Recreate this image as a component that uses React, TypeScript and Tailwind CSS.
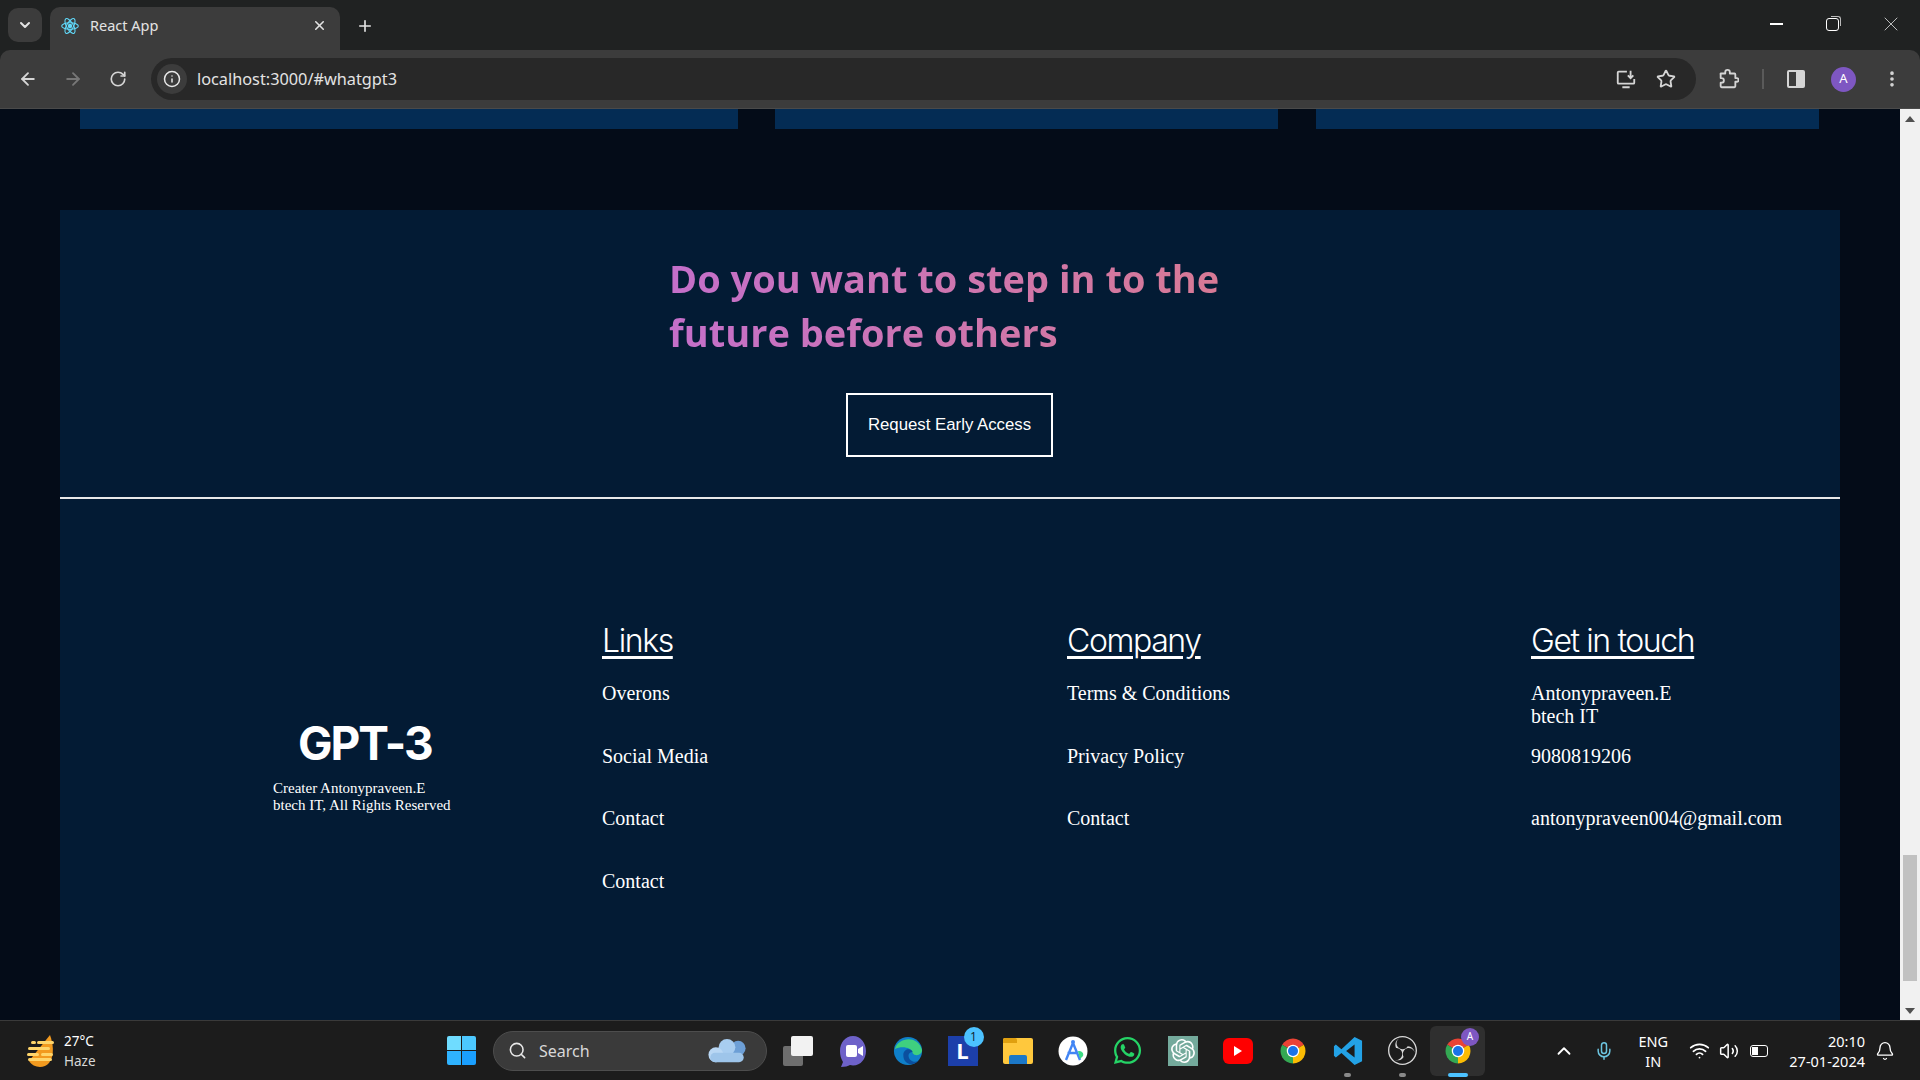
import React from 'react';
import {
  ArrowLeft, ArrowRight, RotateCw, Info, Star, EllipsisVertical, ChevronDown, ChevronUp,
  Plus, X, Mic, Wifi, Volume2, Bell, Search,
} from 'lucide-react';
import { FaWhatsapp } from 'react-icons/fa';
import { SiOpenai, SiObsstudio } from 'react-icons/si';

const linkItems = ['Overons', 'Social Media', 'Contact', 'Contact'];
const companyItems = ['Terms & Conditions', 'Privacy Policy', 'Contact'];

const ReactLogo = () => (
  <svg viewBox="0 0 24 24" className="h-5 w-5" fill="none" stroke="#61dafb" strokeWidth="1.3">
    <circle cx="12" cy="12" r="2" fill="#61dafb" />
    <ellipse cx="12" cy="12" rx="10" ry="4" />
    <ellipse cx="12" cy="12" rx="10" ry="4" transform="rotate(60 12 12)" />
    <ellipse cx="12" cy="12" rx="10" ry="4" transform="rotate(120 12 12)" />
  </svg>
);

const ChromeLogo = () => (
  <svg viewBox="0 0 48 48" className="h-[30px] w-[30px]">
    <path d="M24 24 L6.7 14 A20 20 0 0 1 41.3 14 Z" fill="#ea4335" />
    <path d="M24 24 L41.3 14 A20 20 0 0 1 24 44 Z" fill="#fbbc04" />
    <path d="M24 24 L24 44 A20 20 0 0 1 6.7 14 Z" fill="#34a853" />
    <circle cx="24" cy="24" r="10" fill="#fff" />
    <circle cx="24" cy="24" r="8" fill="#1a73e8" />
  </svg>
);

const Column = ({ title, children }: { title: string; children: React.ReactNode }) => (
  <div className="flex flex-col">
    <h3 className="mb-[19px] font-['Inter',sans-serif] text-[32px] leading-[44px] font-light tracking-[-1.4px] text-white underline decoration-[3px] underline-offset-[4px]">
      {title}
    </h3>
    {children}
  </div>
);

const Item = ({ children }: { children: React.ReactNode }) => (
  <div className="h-[62.5px] font-['Liberation_Serif',serif] text-[20px] leading-[23px] text-white">{children}</div>
);

const BrowserChrome = () => (
  <header className="flex flex-col bg-[#202222] font-['Noto_Sans',sans-serif]">
    <div className="flex h-[50px] items-end text-[#e3e3e3]">
      <div className="mb-2 ml-2 flex h-[34px] w-[34px] items-center justify-center rounded-[10px] bg-[#3c3c3c]">
        <ChevronDown size={16} strokeWidth={3} />
      </div>
      <div className="ml-2 flex h-[43px] w-[290px] items-center rounded-t-[10px] bg-[#3c3c3c] pr-[13px] pb-[6px] pl-[10px]">
        <ReactLogo />
        <span className="ml-[10px] flex-1 text-[14.5px]">React App</span>
        <X size={15} strokeWidth={2.5} />
      </div>
      <div className="mb-[15px] ml-[16px]">
        <Plus size={18} strokeWidth={2.2} />
      </div>
      <div className="mb-[14px] ml-auto flex items-center">
        <div className="h-[1.5px] w-[13px] bg-white" />
        <div className="relative ml-[43px] h-[13px] w-[13px] rounded-[3px] border border-white">
          <div className="absolute top-[-3px] right-[-3px] h-[10px] w-[10px] rounded-tr-[3px] border-t border-r border-[#bbb]" />
        </div>
        <div className="mr-[17px] ml-[40px]">
          <X size={24} strokeWidth={0.8} />
        </div>
      </div>
    </div>
    <div className="flex h-[59px] items-center rounded-t-[10px] border-b border-[#4a4a4a] bg-[#3c3c3c] text-[#d5d5d5]">
      <ArrowLeft size={20} strokeWidth={2.2} className="ml-[18px]" />
      <ArrowRight size={20} strokeWidth={2.2} className="ml-[25px] text-[#777]" />
      <RotateCw size={18} strokeWidth={2.2} className="ml-[26px]" />
      <div className="ml-[24px] flex h-[42px] w-[1545px] items-center rounded-full bg-[#282828]">
        <div className="ml-[6px] flex h-[30px] w-[30px] items-center justify-center rounded-full bg-[#3c3c3c]">
          <Info size={18} strokeWidth={2} className="text-[#e8e8e8]" />
        </div>
        <span className="ml-[10px] flex-1 text-[16.3px] text-[#e3e3e3]">localhost:3000/#whatgpt3</span>
        <svg viewBox="0 0 24 24" className="h-[22px] w-[22px]" fill="none" stroke="#d5d5d5" strokeWidth="2">
          <path d="M13 4H4a1 1 0 0 0-1 1v11a1 1 0 0 0 1 1h16a1 1 0 0 0 1-1v-4M17 3v8M14 8l3 3 3-3M8 21h8" />
        </svg>
        <Star size={20} strokeWidth={2.2} className="mr-[20px] ml-[19px]" />
      </div>
      <svg viewBox="0 0 24 24" className="ml-[21px] h-[22px] w-[22px]" fill="none" stroke="#d5d5d5" strokeWidth="2" strokeLinejoin="round">
        <path d="M4 6h5V4.5a2.5 2.5 0 0 1 5 0V6h5a1 1 0 0 1 1 1v4h1.5a2 2 0 0 1 0 4H20v5a1 1 0 0 1-1 1H5a1 1 0 0 1-1-1v-4h1a2.5 2.5 0 0 0 0-5H4V7a1 1 0 0 1 0-1Z" />
      </svg>
      <div className="ml-[23px] h-[20px] w-[2px] bg-[#5a5a5a]" />
      <div className="ml-[23px] flex h-[18px] w-[18px] overflow-hidden rounded-[2px] border-2 border-[#d5d5d5]">
        <div className="flex-1" />
        <div className="w-[7px] bg-[#d5d5d5]" />
      </div>
      <div className="ml-[26px] flex h-[25px] w-[25px] items-center justify-center rounded-full bg-[#7e57c2] text-[13px] text-white">
        A
      </div>
      <EllipsisVertical size={20} strokeWidth={2.4} className="ml-[26px]" />
    </div>
  </header>
);

const Slot = ({ children, dot, active }: { children: React.ReactNode; dot?: boolean; active?: boolean }) => (
  <div className={`relative flex h-[50px] w-[55px] items-center justify-center rounded-md ${active ? 'bg-[#2f2f2f]' : ''}`}>
    {children}
    {dot && <div className="absolute bottom-[-1px] h-[4px] w-[7px] rounded-full bg-[#8a8a8a]" />}
    {active && <div className="absolute bottom-[-1px] h-[4px] w-[20px] rounded-full bg-[#4cc2ff]" />}
  </div>
);

const Taskbar = () => (
  <footer className="flex h-[60px] items-center border-t border-[#3a3a3a] bg-[#1c1c1c] font-['Noto_Sans',sans-serif] text-white">
    <div className="flex w-[434px] items-center pl-[25px]">
      <svg viewBox="0 0 30 36" className="h-[36px] w-[30px]">
        <path d="M25 2 C28 10 30 22 24 30 C19 36 8 35 4 28 Z" fill="#f29a1f" />
        <g fill="#ffd56b">
          <rect x="6" y="8" width="5" height="3" rx="1.5" />
          <rect x="12" y="8" width="17" height="3" rx="1.5" />
          <rect x="3" y="14" width="22" height="3" rx="1.5" />
          <rect x="2" y="20" width="12" height="3" rx="1.5" />
          <rect x="16" y="20" width="12" height="3" rx="1.5" />
          <rect x="3" y="25" width="24" height="3" rx="1.5" />
        </g>
      </svg>
      <div className="ml-[9px] flex flex-col text-[13.5px] leading-[20px]">
        <span>27°C</span>
        <span className="text-[#d8d8d8]">Haze</span>
      </div>
    </div>
    <Slot>
      <div className="grid h-[29px] w-[29px] grid-cols-2 gap-[1.5px]">
        <div className="rounded-tl-[2px] bg-[#6fdcff]" />
        <div className="rounded-tr-[2px] bg-[#4cc8ff]" />
        <div className="rounded-bl-[2px] bg-[#2fb3ff]" />
        <div className="rounded-br-[2px] bg-[#1a9fff]" />
      </div>
    </Slot>
    <div className="ml-[4px] flex h-[40px] w-[274px] items-center rounded-full border border-[#4d4d4d] bg-[#3a3a3a] pr-4 pl-[14px]">
      <Search size={19} strokeWidth={2} className="text-[#e8e8e8]" />
      <span className="ml-[12px] flex-1 text-[16px] text-[#d8d8d8]">Search</span>
      <svg viewBox="0 0 48 28" className="h-[26px] w-[46px]">
        <circle cx="36" cy="11" r="8" fill="#6d9fd6" />
        <circle cx="24" cy="10" r="9" fill="#a8cdf0" />
        <circle cx="12" cy="18" r="8" fill="#b9d7f4" />
        <rect x="6" y="16" width="36" height="10" rx="5" fill="#9ec5ea" />
      </svg>
    </div>
    <div className="ml-[3px] flex items-center">
      <Slot>
        <div className="relative h-[30px] w-[30px]">
          <div className="absolute bottom-0 left-0 h-[20px] w-[20px] rounded-[2px] bg-[#6e6e6e]" />
          <div className="absolute top-0 right-0 h-[20px] w-[22px] rounded-[2px] bg-[#f2f2f2]" />
        </div>
      </Slot>
      <Slot>
        <svg viewBox="0 0 30 36" className="h-[36px] w-[30px]">
          <path d="M15 3C7 3 2 10 2 18c0 4 1 8 3 11l-2 5c4 0 7-1 9-2 1 0 2 .5 3 .5 8 0 13-7 13-14.5S23 3 15 3Z" fill="#6e62c9" />
          <rect x="8" y="12" width="11" height="12" rx="2" fill="#fff" />
          <path d="M20 16l5-3v10l-5-3Z" fill="#fff" />
        </svg>
      </Slot>
      <Slot>
        <svg viewBox="0 0 32 32" className="h-[30px] w-[30px]">
          <circle cx="16" cy="16" r="15" fill="#0f7fc9" />
          <path d="M2 14 C5 2 26 -2 31 15 C31 21 23 22 21 18 C20 12 9 10 2 14Z" fill="#3fd07f" />
          <path d="M11 20 C11 14 19 12 21 17 C17 17 15 21 18 25 C22 29 27 28 29 24 C25 32 11 33 11 20Z" fill="#0b4f9e" />
        </svg>
      </Slot>
      <Slot>
        <div className="relative flex h-[30px] w-[30px] items-center justify-center bg-[#1c3faa] font-['Open_Sans',sans-serif] text-[22px] font-bold text-white">
          L
          <div className="absolute top-[-9px] right-[-6px] flex h-[20px] w-[20px] items-center justify-center rounded-full bg-[#4cc2ff] text-[12px] font-normal text-[#10202c]">
            1
          </div>
        </div>
      </Slot>
      <Slot>
        <div className="flex h-[26px] w-[30px] flex-col overflow-hidden rounded-[2px] bg-[#ffc83d]">
          <div className="h-[5px] w-[14px] rounded-tr-[2px] bg-[#e0a010]" />
          <div className="mt-auto ml-[6px] h-[9px] w-[18px] rounded-t-[2px] bg-[#1c78c8]" />
        </div>
      </Slot>
      <Slot>
        <svg viewBox="0 0 30 30" className="h-[30px] w-[30px]" fill="none">
          <circle cx="15" cy="15" r="14.5" fill="#fff" />
          <circle cx="15" cy="6" r="2" fill="#4285f4" />
          <path d="M15 7L8 24M15 7l7 17M9.5 17h11" stroke="#4285f4" strokeWidth="2.4" />
          <path d="M20 15c4 0 6 2 5 5l-3 3Z" fill="#3ddc84" />
        </svg>
      </Slot>
      <Slot>
        <FaWhatsapp size={31} color="#25d366" />
      </Slot>
      <Slot>
        <div className="flex h-[30px] w-[30px] items-center justify-center bg-[#74aa9c]">
          <SiOpenai size={24} color="#fff" />
        </div>
      </Slot>
      <Slot>
        <div className="flex h-[26px] w-[30px] items-center justify-center rounded-[6px] bg-[#ff0000]">
          <div className="h-0 w-0 border-y-[5px] border-l-[8px] border-y-transparent border-l-white" />
        </div>
      </Slot>
      <Slot>
        <ChromeLogo />
      </Slot>
      <Slot dot>
        <svg viewBox="0 0 32 32" className="h-[30px] w-[30px]">
          <path d="M23 1 L31 5 V27 L23 31 L9 18 L3 23 L1 21 V11 L3 9 L9 14 Z" fill="#23a2e6" />
          <path d="M23 9 L14 16 L23 23 Z" fill="#1c1c1c" />
        </svg>
      </Slot>
      <Slot dot>
        <SiObsstudio size={29} color="#d8d8d8" />
      </Slot>
      <Slot active>
        <ChromeLogo />
        <div className="absolute top-[2px] right-[6px] flex h-[18px] w-[18px] items-center justify-center rounded-full bg-[#7e57c2] text-[10px] text-white">
          A
        </div>
      </Slot>
    </div>
    <div className="ml-auto flex items-center">
      <ChevronUp size={22} strokeWidth={2} />
      <Mic size={20} strokeWidth={1.8} className="ml-[19px] text-[#6cc5e0]" />
      <div className="ml-[21px] flex w-[36px] flex-col items-center text-[14.5px] leading-[20px]">
        <span>ENG</span>
        <span>IN</span>
      </div>
      <Wifi size={21} strokeWidth={2} className="ml-[18px]" />
      <Volume2 size={20} strokeWidth={1.8} className="ml-[9px]" />
      <div className="ml-[11px] flex h-[12px] w-[18px] items-center rounded-[3px] border-[1.5px] border-white p-[1px]">
        <div className="h-full w-[6px] bg-white" />
      </div>
      <div className="ml-[21px] flex flex-col items-end text-[14.5px] leading-[20px]">
        <span>20:10</span>
        <span>27-01-2024</span>
      </div>
      <Bell size={20} strokeWidth={1.6} className="mr-[25px] ml-[10px]" />
    </div>
  </footer>
);

const App = () => {
  return (
    <div className="flex h-screen w-screen flex-col overflow-hidden bg-[#040c18]">
      <BrowserChrome />
      <div className="flex min-h-0 flex-1">
        <main className="flex min-w-0 flex-1 flex-col">
          <div className="flex gap-[37px] pr-[80px] pl-[80px]">
            <div className="h-[20px] w-[658px] bg-[#042c54]" />
            <div className="h-[20px] w-[503px] bg-[#042c54]" />
            <div className="ml-px h-[20px] w-[503px] bg-[#042c54]" />
          </div>
          <section className="mt-[81px] mr-[60px] ml-[60px] flex flex-1 flex-col bg-[#031b34]">
            <div className="flex h-[289px] shrink-0 flex-col border-b-2 border-[#e8e8e8]">
              <h1 className="mt-[41px] ml-[609px] w-[600px] bg-linear-to-r from-[#c46fca] to-[#d97a90] bg-clip-text font-['Open_Sans',sans-serif] text-[38px] leading-[54px] font-bold text-transparent">
                Do you want to step in to the future before others
              </h1>
              <button className="mt-[34px] ml-[786px] flex h-[64px] w-[207px] items-center justify-center border-2 border-white font-['Liberation_Sans',sans-serif] text-[16.8px] text-white">
                Request Early Access
              </button>
            </div>
            <div className="flex pt-[120px]">
              <div className="flex w-[542px] flex-col pt-[96px] pl-[213px]">
                <div className="ml-[25px] font-['Inter',sans-serif] text-[46px] leading-[56px] font-bold tracking-[-2px] text-white">
                  GPT-3
                </div>
                <p className="mt-[9px] font-['Liberation_Serif',serif] text-[15px] leading-[16.6px] text-white">
                  Creater Antonypraveen.E
                  <br />
                  btech IT, All Rights Reserved
                </p>
              </div>
              <div className="w-[465px]">
                <Column title="Links">
                  {linkItems.map((item, i) => (
                    <Item key={i}>{item}</Item>
                  ))}
                </Column>
              </div>
              <div className="w-[464px]">
                <Column title="Company">
                  {companyItems.map((item) => (
                    <Item key={item}>{item}</Item>
                  ))}
                </Column>
              </div>
              <Column title="Get in touch">
                <Item>
                  Antonypraveen.E
                  <br />
                  btech IT
                </Item>
                <Item>9080819206</Item>
                <Item>antonypraveen004@gmail.com</Item>
              </Column>
            </div>
          </section>
        </main>
        <aside className="flex w-[20px] flex-col items-center bg-[#f1f1f1] text-[#505050]">
          <div className="mt-[7px] h-0 w-0 border-x-[5px] border-b-[6px] border-x-transparent border-b-[#505050]" />
          <div className="mt-[733px] h-[126px] w-[14px] bg-[#c1c1c1]" />
          <div className="mt-auto mb-[6px] h-0 w-0 border-x-[5px] border-t-[6px] border-x-transparent border-t-[#505050]" />
        </aside>
      </div>
      <Taskbar />
    </div>
  );
};

export default App;
